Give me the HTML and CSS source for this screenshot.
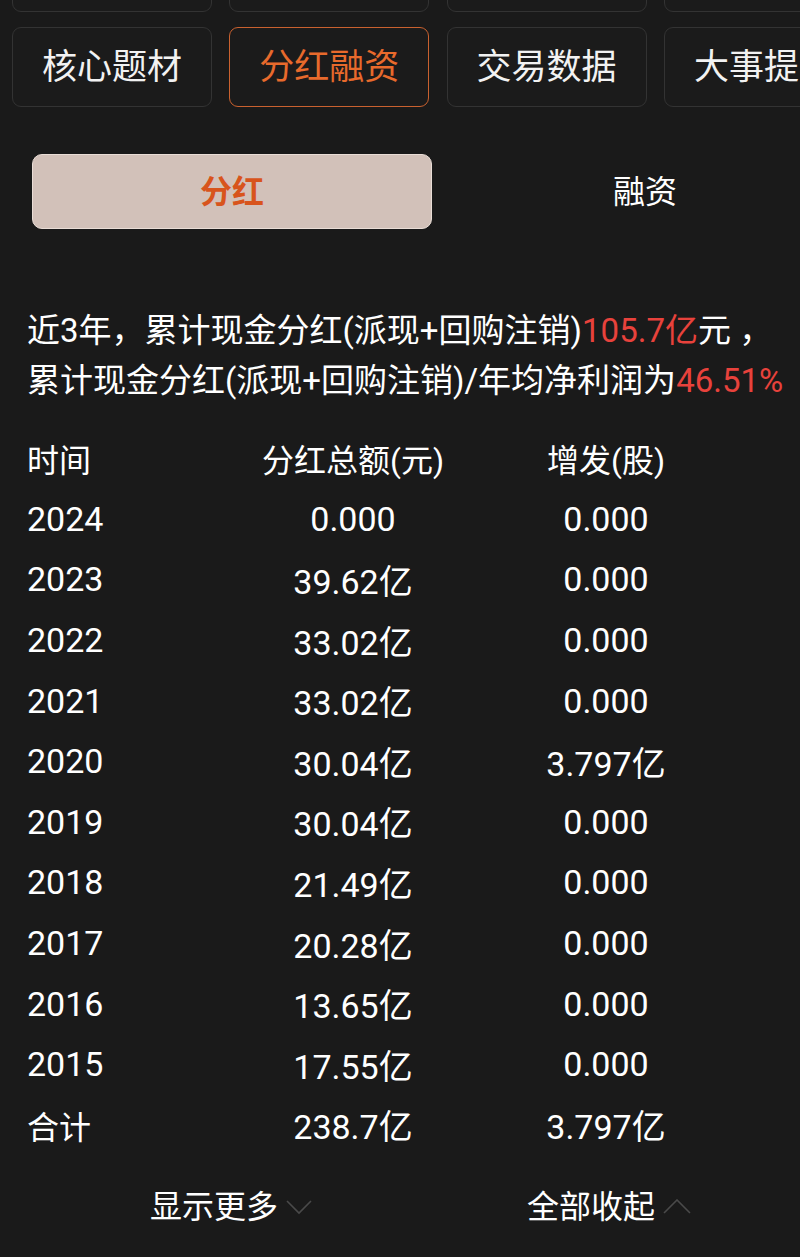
FILE: index.html
```
<!DOCTYPE html>
<html lang="zh-CN">
<head>
<meta charset="utf-8">
<title>分红融资</title>
<link rel="stylesheet" href="styles.css">
</head>
<body>
<div class="page">
  <div class="tabs">
    <div class="tab-row tab-row-top">
      <div class="tab"></div>
      <div class="tab"></div>
      <div class="tab"></div>
      <div class="tab"></div>
    </div>
    <div class="tab-row">
      <div class="tab">核心题材</div>
      <div class="tab tab-active">分红融资</div>
      <div class="tab">交易数据</div>
      <div class="tab">大事提醒</div>
    </div>
  </div>

  <div class="segment">
    <div class="seg seg-active">分红</div>
    <div class="seg">融资</div>
  </div>

  <div class="summary">
    <p>近3年，累计现金分红(派现+回购注销)<span class="red">105.7亿</span>元 ，</p>
    <p>累计现金分红(派现+回购注销)/年均净利润为<span class="red">46.51%</span></p>
  </div>

  <div class="table">
    <div class="row head"><span>时间</span><span class="c">分红总额(元)</span><span class="c">增发(股)</span></div>
    <div class="row"><span class="n">2024</span><span class="c n">0.000</span><span class="c n">0.000</span></div>
    <div class="row"><span class="n">2023</span><span class="c n">39.62亿</span><span class="c n">0.000</span></div>
    <div class="row"><span class="n">2022</span><span class="c n">33.02亿</span><span class="c n">0.000</span></div>
    <div class="row"><span class="n">2021</span><span class="c n">33.02亿</span><span class="c n">0.000</span></div>
    <div class="row"><span class="n">2020</span><span class="c n">30.04亿</span><span class="c n">3.797亿</span></div>
    <div class="row"><span class="n">2019</span><span class="c n">30.04亿</span><span class="c n">0.000</span></div>
    <div class="row"><span class="n">2018</span><span class="c n">21.49亿</span><span class="c n">0.000</span></div>
    <div class="row"><span class="n">2017</span><span class="c n">20.28亿</span><span class="c n">0.000</span></div>
    <div class="row"><span class="n">2016</span><span class="c n">13.65亿</span><span class="c n">0.000</span></div>
    <div class="row"><span class="n">2015</span><span class="c n">17.55亿</span><span class="c n">0.000</span></div>
    <div class="row"><span>合计</span><span class="c n">238.7亿</span><span class="c n">3.797亿</span></div>
  </div>

  <div class="footer">
    <div class="more">显示更多<svg class="chev" width="26" height="16" viewBox="0 0 26 16"><path d="M1 2 L13 14 L25 2" fill="none" stroke="#4a4a4a" stroke-width="1.6"/></svg></div>
    <div class="more">全部收起<svg class="chev" width="28" height="16" viewBox="0 0 28 16"><path d="M1 14 L14 1 L27 14" fill="none" stroke="#4a4a4a" stroke-width="1.6"/></svg></div>
  </div>
</div>
</body>
</html>
```

FILE: styles.css
```
html, body {
  margin: 0;
  padding: 0;
  background: #1a1a1a;
}
body {
  width: 800px;
  height: 1257px;
  overflow: hidden;
  color: #ffffff;
  font-family: Roboto, "Noto Sans CJK SC", sans-serif;
}
.page {
  display: flex;
  flex-direction: column;
  overflow: hidden;
}
.tabs {
  display: flex;
  flex-direction: column;
  gap: 15px;
  padding-left: 12px;
  margin-top: -68px;
}
.tab-row {
  display: flex;
  gap: 17.3px;
  white-space: nowrap;
}
.tab {
  flex: 0 0 200px;
  height: 80px;
  box-sizing: border-box;
  border: 1.5px solid #333333;
  border-radius: 9px;
  display: flex;
  align-items: center;
  justify-content: center;
  padding-bottom: 7px;
  font-size: 35px;
  color: #f2f2f2;
  background: #1b1b1b;
  overflow: hidden;
}
.tab-active {
  border-color: #c9612f;
  color: #e86a2c;
}
.segment {
  display: grid;
  grid-template-columns: 400px 310px;
  column-gap: 58px;
  margin-top: 47px;
  padding-left: 32px;
}
.seg {
  height: 75px;
  display: flex;
  align-items: center;
  justify-content: center;
  padding-bottom: 5px;
  box-sizing: border-box;
  font-size: 32px;
  color: #ffffff;
  border-radius: 10px;
}
.seg-active {
  background: #d2c1b9;
  border: 1.5px solid #e9ddd6;
  color: #d8541c;
  font-weight: 700;
}
.summary {
  margin-top: 77px;
  padding-left: 27px;
  font-size: 33px;
  line-height: 50px;
  white-space: nowrap;
}
.summary p {
  margin: 0;
}
.red {
  color: #e8423c;
}
.table {
  margin-top: 22px;
  padding-left: 27px;
  display: flex;
  flex-direction: column;
}
.row {
  display: grid;
  grid-template-columns: 200px 252px 254px;
  height: 60.6px;
  align-items: center;
  font-size: 32px;
}
.row .c {
  text-align: center;
}
.row .n {
  font-size: 34px;
}
.footer {
  display: flex;
  gap: 215px;
  padding-left: 150px;
  margin-top: 24px;
  font-size: 32px;
}
.more {
  display: flex;
  align-items: center;
  gap: 8px;
  height: 50px;
}
.chev {
  margin-top: 6px;
}
```
